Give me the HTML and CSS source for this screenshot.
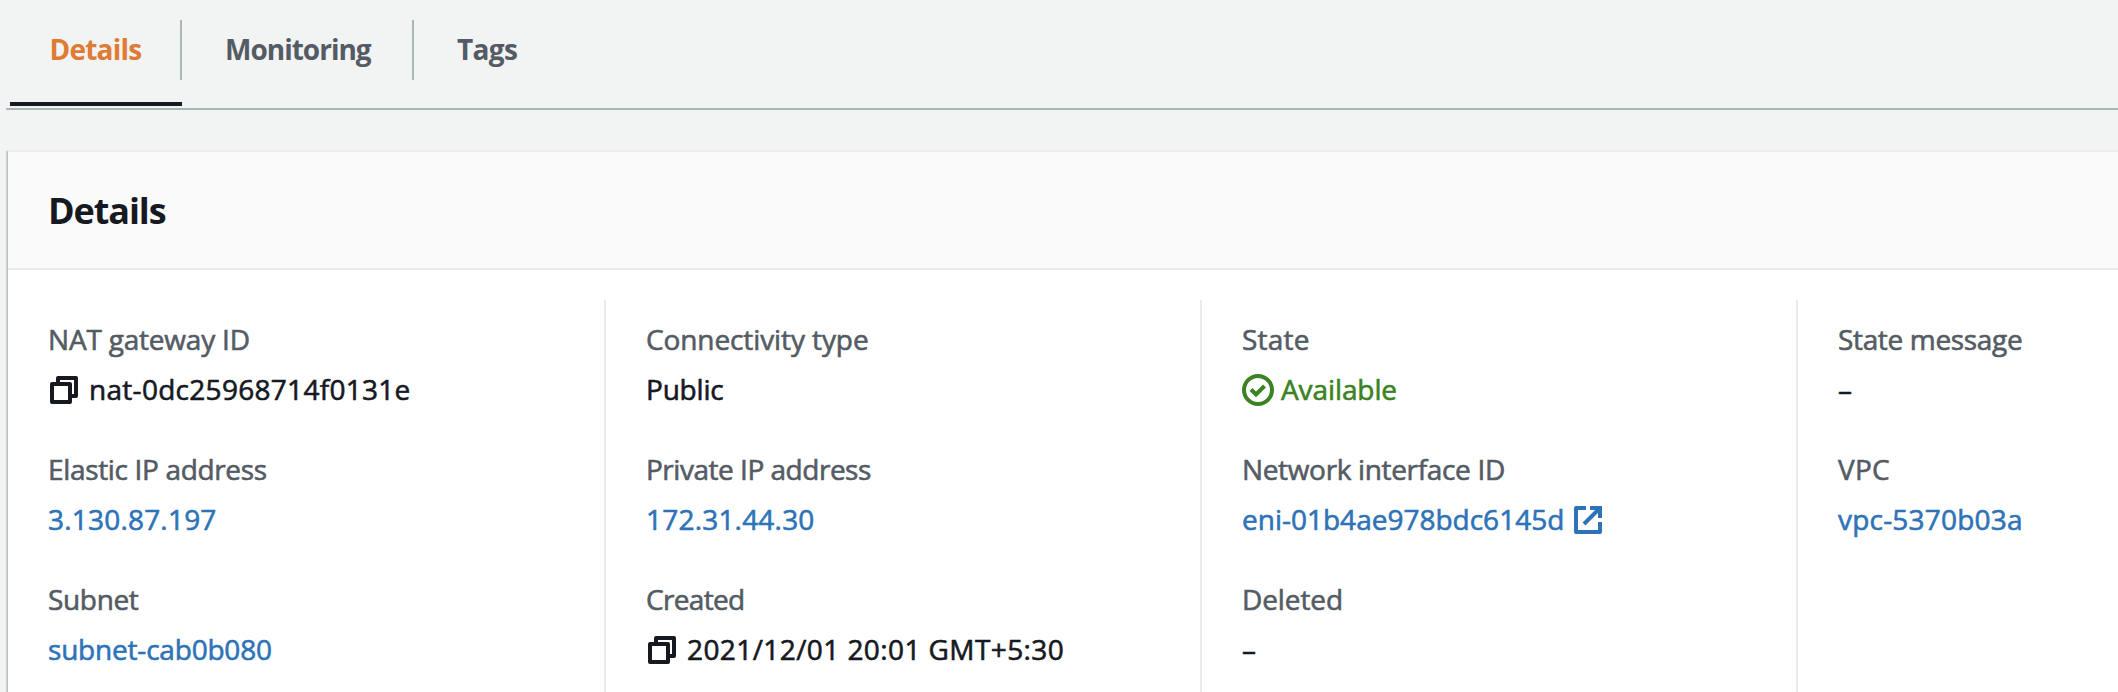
FILE: index.html
```html
<!DOCTYPE html>
<html lang="en">
<head>
<meta charset="utf-8">
<title>NAT gateway details</title>
<link rel="stylesheet" href="styles.css">
</head>
<body>
<svg class="sprite" aria-hidden="true">
  <symbol id="copy" viewBox="0 0 28 28">
    <path d="M8 6V2H26V20H22" fill="none" stroke="currentColor" stroke-width="4" stroke-linejoin="round"/>
    <rect x="2" y="8" width="18" height="18" fill="none" stroke="currentColor" stroke-width="4" stroke-linejoin="round"/>
  </symbol>
</svg>
<nav class="tabs">
  <a class="tab tab-details active"><span class="tab-label">Details</span></a>
  <a class="tab tab-monitoring"><span class="tab-label">Monitoring</span></a>
  <a class="tab tab-tags"><span class="tab-label">Tags</span></a>
</nav>
<section class="panel">
  <header class="panel-header"><h2 class="panel-title">Details</h2></header>
  <div class="columns">
    <dl class="column">
      <dt class="label tight-2">NAT gateway ID</dt>
      <dd class="value loose-2"><svg class="icon-copy"><use href="#copy"/></svg><span>nat-0dc25968714f0131e</span></dd>
      <dt class="label tight-3">Elastic IP address</dt>
      <dd class="value link loose-1">3.130.87.197</dd>
      <dt class="label tight-3">Subnet</dt>
      <dd class="value link tight-2">subnet-cab0b080</dd>
    </dl>
    <dl class="column">
      <dt class="label tight-1">Connectivity type</dt>
      <dd class="value tight-2">Public</dd>
      <dt class="label tight-4">Private IP address</dt>
      <dd class="value link loose-1">172.31.44.30</dd>
      <dt class="label tight-5">Created</dt>
      <dd class="value loose-3"><svg class="icon-copy"><use href="#copy"/></svg><span>2021/12/01 20:01 GMT+5:30</span></dd>
    </dl>
    <dl class="column">
      <dt class="label loose-1">State</dt>
      <dd class="value status tight-1"><svg class="icon-status" viewBox="0 0 32 32"><circle cx="16" cy="16" r="14" fill="none" stroke="currentColor" stroke-width="4"/><path d="M9 15.5L14 20.5L22.5 12" fill="none" stroke="currentColor" stroke-width="4"/></svg><span>Available</span></dd>
      <dt class="label tight-3">Network interface ID</dt>
      <dd class="value link"><span>eni-01b4ae978bdc6145d</span><svg class="icon-external" viewBox="0 0 28 28"><path d="M12 2H2V26H26V16" fill="none" stroke="currentColor" stroke-width="4" stroke-linejoin="round"/><path d="M16 2H26V12M25 3L10 18" fill="none" stroke="currentColor" stroke-width="4"/></svg></dd>
      <dt class="label tight-1">Deleted</dt>
      <dd class="value">–</dd>
    </dl>
    <dl class="column">
      <dt class="label tight-3">State message</dt>
      <dd class="value">–</dd>
      <dt class="label loose-1">VPC</dt>
      <dd class="value link loose-1">vpc-5370b03a</dd>
    </dl>
  </div>
</section>
</body>
</html>
```
FILE: styles.css
```css
* { box-sizing: border-box; }
html, body { margin: 0; height: 692px; overflow: hidden; }
body {
  display: flex;
  flex-direction: column;
  padding-left: 6px;
  background: #f2f3f3;
  color: #16191f;
  font: 28px/44px "Open Sans", "Noto Sans", sans-serif;
}
.sprite { display: none; }

.tabs {
  display: flex;
  flex: none;
  height: 110px;
  padding-left: 4px;
  border-bottom: 2px solid #aab7b8;
  color: #545b64;
  font-weight: 700;
}
.tab { height: 106px; padding-top: 20px; border-bottom: 4px solid transparent; }
.tab-label {
  display: block;
  height: 60px;
  padding-left: 43px;
  border-right: 2px solid #aab7b8;
  line-height: 59px;
  white-space: nowrap;
}
.tab-details { width: 172px; letter-spacing: -0.8px; }
.tab-details .tab-label { padding-left: 39.5px; }
.tab-monitoring { width: 232px; letter-spacing: -1px; }
.tab-tags { letter-spacing: -0.65px; }
.tab-tags .tab-label { border-right: 0; }
.active { border-bottom-color: #16191f; color: #e07b33; }

.panel {
  flex: 1;
  margin: 40px 0 0 1px;
  border-top: 2px solid #eaeded;
  border-left: 1px solid #b9c2c2;
  background: #fff;
  box-shadow: -1px 1px 1px rgba(0, 28, 36, 0.15);
}
.panel-header {
  display: flex;
  align-items: center;
  height: 118px;
  padding: 2px 0 0 40px;
  border-bottom: 2px solid #eaeaea;
  background: #fafafa;
}
.panel-title {
  margin: 0;
  font-size: 36px;
  line-height: 48px;
  letter-spacing: -1.1px;
}

.columns {
  display: grid;
  grid-template-columns: 596px 596px 596px 1fr;
  height: 390px;
  margin-top: 30px;
}
.column {
  margin: 0;
  padding: 17px 0 0 40px;
  border-left: 2px solid #eaeaea;
}
.column:first-child { padding-left: 40px; border-left: 0; }
.label {
  color: #545b64;
  -webkit-text-stroke: 0.6px currentColor;
  white-space: nowrap;
}
.value {
  display: flex;
  align-items: center;
  height: 44px;
  margin: 6px 0 36px;
  -webkit-text-stroke: 0.6px currentColor;
  white-space: nowrap;
}
.value svg { flex: none; margin-top: 2px; -webkit-text-stroke: 0; }
.link { color: #2e73b8; }
.status { color: #3b8223; }
.value .icon-copy { width: 28px; height: 28px; margin: 2px 11px 0 2px; }
.value .icon-status { width: 32px; height: 32px; margin: 2px 7px 0 0; }
.value .icon-external { width: 28px; height: 28px; margin: 2px 0 0 10px; }

/* Tracking steps */
.tight-5 { letter-spacing: -0.68px; }
.tight-4 { letter-spacing: -0.48px; }
.tight-3 { letter-spacing: -0.34px; }
.tight-2 { letter-spacing: -0.2px; }
.tight-1 { letter-spacing: -0.1px; }
.loose-1 { letter-spacing: 0.2px; }
.loose-2 { letter-spacing: 0.29px; }
.loose-3 { letter-spacing: 0.41px; }
```
